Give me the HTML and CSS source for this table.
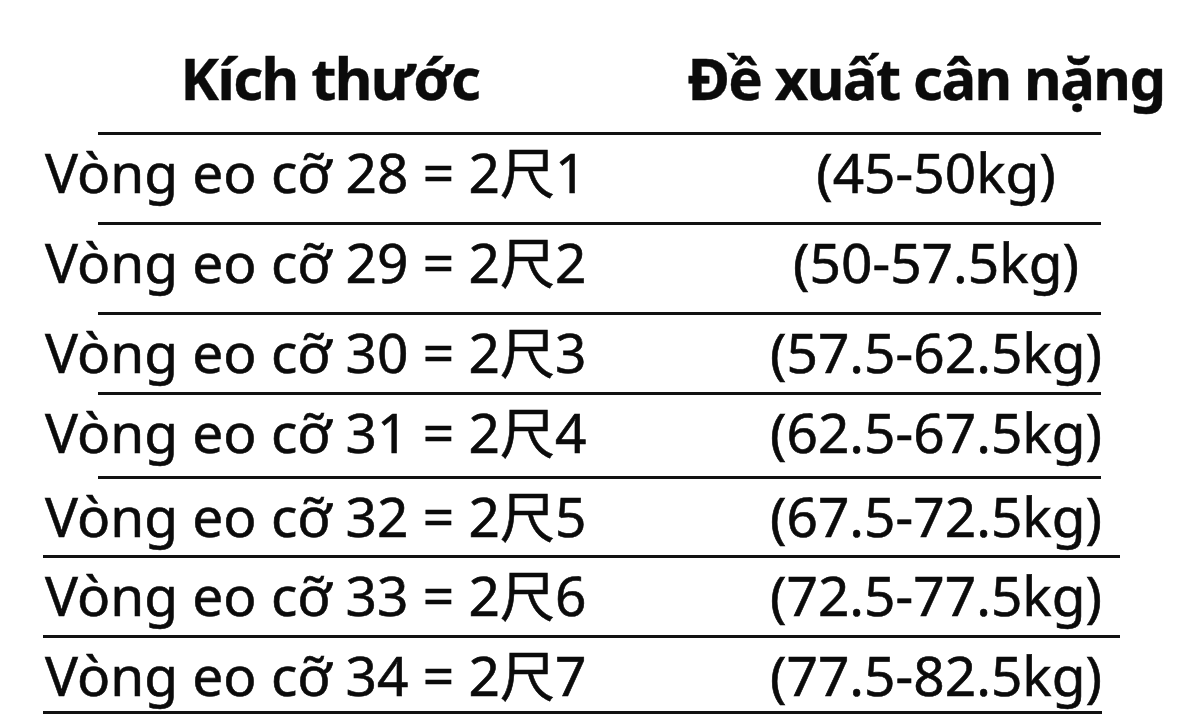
FILE: index.html
```html
<!DOCTYPE html>
<html lang="vi">
<head>
<meta charset="utf-8">
<title>Bảng kích thước</title>
<link rel="stylesheet" href="styles.css">
</head>
<body>
<div class="sheet">
  <div class="cells head">
    <div class="cell left">Kích thước</div>
    <div class="cell right">Đề xuất cân nặng</div>
  </div>
  <div class="rule"></div>

  <div class="cells h87">
    <div class="cell">Vòng eo cỡ 28 = 2尺1</div>
    <div class="cell right">(45-50kg)</div>
  </div>
  <div class="rule"></div>

  <div class="cells h87">
    <div class="cell">Vòng eo cỡ 29 = 2尺2</div>
    <div class="cell right">(50-57.5kg)</div>
  </div>
  <div class="rule"></div>

  <div class="cells h77">
    <div class="cell">Vòng eo cỡ 30 = 2尺3</div>
    <div class="cell right">(57.5-62.5kg)</div>
  </div>
  <div class="rule"></div>

  <div class="cells h81">
    <div class="cell">Vòng eo cỡ 31 = 2尺4</div>
    <div class="cell right">(62.5-67.5kg)</div>
  </div>
  <div class="rule"></div>

  <div class="cells h76">
    <div class="cell">Vòng eo cỡ 32 = 2尺5</div>
    <div class="cell right">(67.5-72.5kg)</div>
  </div>
  <div class="rule wide"></div>

  <div class="cells h77">
    <div class="cell">Vòng eo cỡ 33 = 2尺6</div>
    <div class="cell right">(72.5-77.5kg)</div>
  </div>
  <div class="rule wide"></div>

  <div class="cells h73">
    <div class="cell">Vòng eo cỡ 34 = 2尺7</div>
    <div class="cell right">(77.5-82.5kg)</div>
  </div>
  <div class="rule last"></div>
</div>
</body>
</html>
```
FILE: styles.css
```css
html, body {
  margin: 0;
  padding: 0;
  background: #ffffff;
}

.sheet {
  width: 1199px;
  display: flex;
  flex-direction: column;
  font-family: "Noto Sans", "Noto Sans CJK SC", sans-serif;
  color: #0b0b0b;
}

.cells {
  display: grid;
  grid-template-columns: 570px 526px;
  column-gap: 58px;
  padding-left: 45px;
  box-sizing: border-box;
  font-size: 55px;
  line-height: 55px;
  padding-top: 9px;
  -webkit-text-stroke: 0.6px #0b0b0b;
}

.cell {
  white-space: nowrap;
}

.cell.right {
  text-align: center;
}

.head {
  height: 132px;
  padding-top: 49px;
  font-weight: 700;
  font-size: 58px;
  line-height: 58px;
  letter-spacing: -1.6px;
  -webkit-text-stroke: 0.4px #0b0b0b;
}

.head .left {
  text-align: center;
}

.head .right {
  padding-right: 20px;
}

.h87 { height: 87px; }
.h81 { height: 81px; }
.h77 { height: 77px; }
.h76 { height: 76px; }
.h73 { height: 73px; }

.rule {
  height: 3px;
  background: #111111;
  margin-left: 98px;
  width: 1003px;
}

.rule.wide {
  margin-left: 43px;
  width: 1077px;
}

.rule.last {
  margin-left: 43px;
  width: 1059px;
}
```
